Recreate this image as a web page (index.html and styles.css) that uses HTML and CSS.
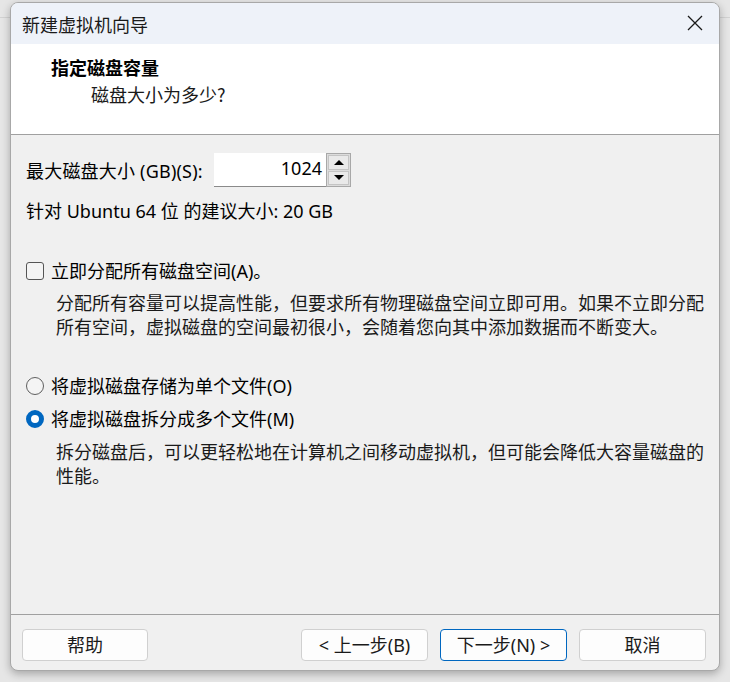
FILE: index.html
```html
<!DOCTYPE html>
<html lang="zh-CN">
<head>
<meta charset="utf-8">
<title>新建虚拟机向导</title>
<link rel="stylesheet" href="styles.css">
</head>
<body>
<div class="window">
  <div class="titlebar">
    <span class="title">新建虚拟机向导</span>
    <svg class="close" width="16" height="16" viewBox="0 0 16 16"><path d="M1 1 L15 15 M15 1 L1 15" stroke="#1a1a1a" stroke-width="1.3" fill="none"/></svg>
  </div>
  <div class="header">
    <div class="h-title">指定磁盘容量</div>
    <div class="h-sub">磁盘大小为多少?</div>
  </div>
  <div class="content">
    <div class="size-row">
      <span class="label">最大磁盘大小 (GB)(S):</span>
      <div class="spinbox">
        <div class="spin-input">1024</div>
        <div class="spin-btns">
          <div class="spin-btn"><span class="tri up"></span></div>
          <div class="spin-btn"><span class="tri down"></span></div>
        </div>
      </div>
    </div>
    <div class="recommend">针对 Ubuntu 64 位 的建议大小: 20 GB</div>
    <div class="option check-row">
      <span class="checkbox"></span>
      <span>立即分配所有磁盘空间(A)。</span>
    </div>
    <div class="desc">分配所有容量可以提高性能，但要求所有物理磁盘空间立即可用。如果不立即分配<br>所有空间，虚拟磁盘的空间最初很小，会随着您向其中添加数据而不断变大。</div>
    <div class="option radio-one">
      <span class="radio"></span>
      <span>将虚拟磁盘存储为单个文件(O)</span>
    </div>
    <div class="option radio-two">
      <span class="radio checked"></span>
      <span>将虚拟磁盘拆分成多个文件(M)</span>
    </div>
    <div class="desc">拆分磁盘后，可以更轻松地在计算机之间移动虚拟机，但可能会降低大容量磁盘的<br>性能。</div>
  </div>
  <div class="footer">
    <button class="btn help">帮助</button>
    <div class="spacer"></div>
    <button class="btn">&lt; 上一步(B)</button>
    <button class="btn default">下一步(N) &gt;</button>
    <button class="btn cancel">取消</button>
  </div>
</div>
</body>
</html>
```

FILE: styles.css
```css
html, body {
  margin: 0;
  padding: 0;
}
body {
  width: 730px;
  height: 682px;
  overflow: hidden;
  background: linear-gradient(to bottom, transparent 17px, #d2d2d2 17px, #d2d2d2 18px, transparent 18px), #e6e6e6;
  font-family: "Noto Sans", "Noto Sans CJK SC", sans-serif;
  font-size: 18px;
  color: #000;
}
.window {
  margin: 2px 0 0 10px;
  width: 710px;
  height: 669px;
  box-sizing: border-box;
  border: 1px solid #a8a8a8;
  border-radius: 8px;
  background: #f0f0f0;
  overflow: hidden;
  box-shadow: 0 3px 8px rgba(0, 0, 0, 0.28);
  display: flex;
  flex-direction: column;
}
.titlebar {
  height: 41px;
  background: #eef2f9;
  display: flex;
  align-items: center;
  padding: 0 16px 0 11px;
  flex-shrink: 0;
}
.title {
  flex: 1;
  font-family: "Noto Sans CJK SC", sans-serif;
  font-size: 18px;
  line-height: 24px;
  color: #1a1a1a;
}
.close {
  display: block;
  margin-top: -2px;
}
.header {
  background: #fff;
  border-bottom: 1px solid #a0a0a0;
  flex-shrink: 0;
  box-sizing: border-box;
  height: 91px;
  padding-top: 11px;
  font-family: "Noto Sans CJK SC", sans-serif;
}
.h-title {
  padding-left: 40px;
  font-weight: bold;
  font-size: 18px;
  line-height: 24px;
}
.h-sub {
  padding-left: 80px;
  line-height: 24px;
  margin-top: 3px;
  color: #1a1a1a;
}
.content {
  flex: 1;
  padding: 18px 15px 0 15px;
  border-bottom: 1px solid #a0a0a0;
}
.size-row {
  display: flex;
  align-items: center;
  height: 34px;
}
.label {
  width: 188px;
  line-height: 24px;
  padding-top: 2px;
  letter-spacing: 0.2px;
}
.spinbox {
  display: flex;
  height: 34px;
}
.spin-input {
  width: 112px;
  box-sizing: border-box;
  background: #fff;
  border-bottom: 1px solid #8a8a8a;
  text-align: right;
  padding-right: 4px;
  line-height: 30px;
}
.spin-btns {
  width: 25px;
  box-sizing: border-box;
  border: 1px solid #a8a8a8;
  display: flex;
  flex-direction: column;
  background: #dcdcdc;
  padding: 1px;
  gap: 1px;
}
.spin-btn {
  flex: 1;
  background: #e9e9e9;
  border: 1px solid #c4c4c4;
  display: flex;
  align-items: center;
  justify-content: center;
}
.tri {
  width: 0;
  height: 0;
  border-left: 5px solid transparent;
  border-right: 5px solid transparent;
}
.tri.up {
  border-bottom: 5px solid #000;
}
.tri.down {
  border-top: 5px solid #000;
}
.recommend {
  margin-top: 12px;
  line-height: 24px;
}
.option {
  display: flex;
  align-items: center;
  gap: 7px;
  line-height: 24px;
}
.check-row {
  margin-top: 36px;
}
.checkbox {
  width: 18px;
  height: 18px;
  box-sizing: border-box;
  border: 1px solid #555;
  border-radius: 3px;
  background: #f4f4f4;
  flex-shrink: 0;
}
.desc {
  margin: 8px 0 0 30px;
  line-height: 24px;
  white-space: nowrap;
  color: #1a1a1a;
}
.radio-one {
  margin-top: 35px;
}
.radio-two {
  margin-top: 9px;
}
.radio-two + .desc {
  margin-top: 9px;
}
.radio {
  width: 18px;
  height: 18px;
  box-sizing: border-box;
  border: 1px solid #5f5f5f;
  border-radius: 50%;
  background: #f4f4f4;
  flex-shrink: 0;
}
.radio.checked {
  border: 5px solid #0067c0;
  background: #fff;
}
.footer {
  height: 55px;
  flex-shrink: 0;
  display: flex;
  align-items: flex-start;
  padding: 14px 13px 0 11px;
  gap: 12px;
  box-sizing: border-box;
}
.spacer {
  flex: 1;
}
.btn {
  width: 127px;
  height: 32px;
  box-sizing: border-box;
  border: 1px solid #d0d0d0;
  border-radius: 4px;
  background: #fdfdfd;
  font-family: "Noto Sans", "Noto Sans CJK SC", sans-serif;
  font-size: 18px;
  color: #1a1a1a;
  padding: 0;
  line-height: 28px;
}
.btn.help {
  width: 126px;
}
.btn.default {
  border-color: #0067c0;
}
```
